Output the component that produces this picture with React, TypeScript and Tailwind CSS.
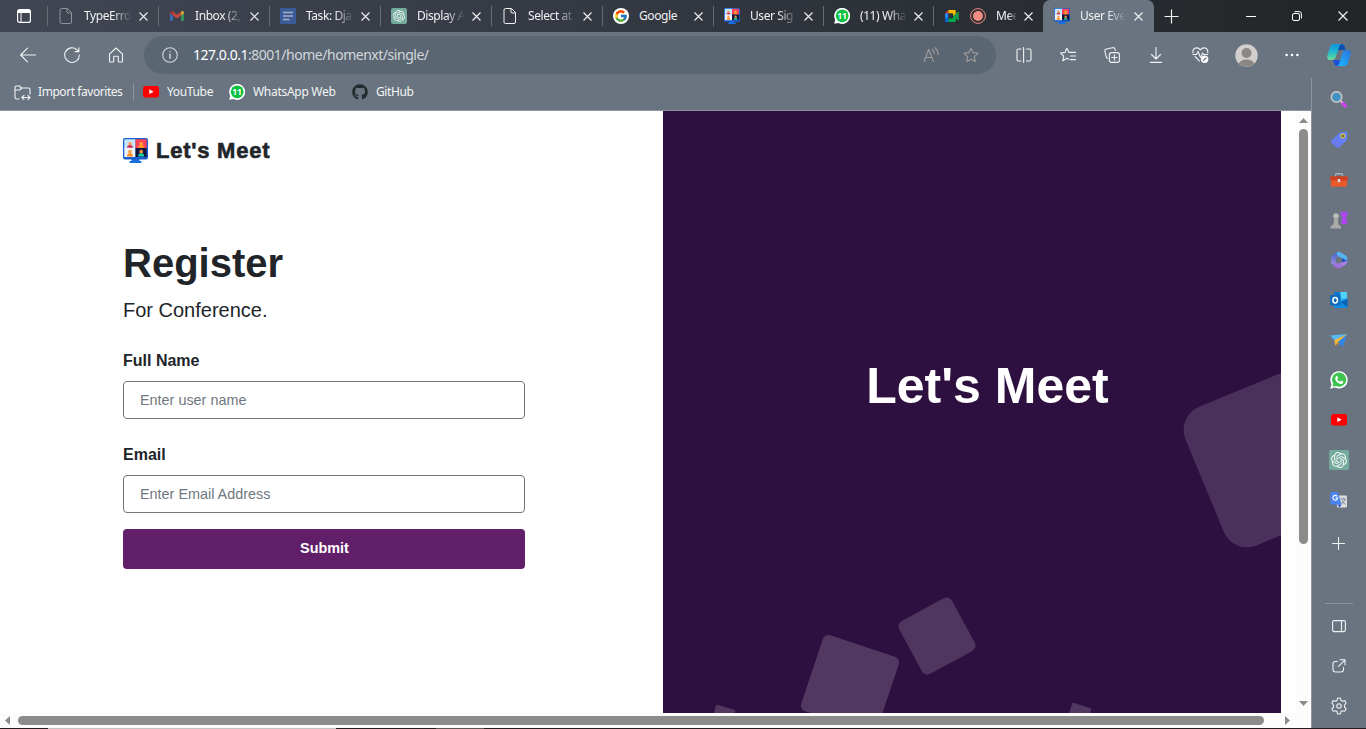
import type { ReactNode } from "react";
import { FaGithub } from "react-icons/fa";
import { FcGoogle } from "react-icons/fc";
import { SiOpenai } from "react-icons/si";

const uiFont = "font-['Noto_Sans','Open_Sans',sans-serif]";
const pageFont = "font-['Liberation_Sans',Arial,sans-serif]";

/* ---------- shared icons ---------- */

function MeetLogo({ size }: { size: number }) {
  return (
    <svg width={size} height={size} viewBox="0 0 25 25">
      <path d="M8.500 20h8v3h1.500q.5 0 .5.500v1.500h-12v-1.500q0-.5.5-.5h1.500z" fill="#1a6fe0" />
      <rect width="25" height="21.500" rx="2" fill="#1a5fd0" />
      <path d="M1.300 9V2.300q0-1 1-1h10.200v9.200H1.300z" fill="#c3e6fb" />
      <path d="M12.500 1.300h10.200q1 0 1 1v8.200H12.500z" fill="#fb4357" />
      <path d="M1.300 10h11.200v9H1.300z" fill="#f1f6fd" />
      <path d="M12.500 10h11.200v9H12.500z" fill="#0d1740" />
      <circle cx="7" cy="5.700" r="1.700" fill="#ff9a56" />
      <path d="M4 9.700q0-2.600 3-2.600t3 2.600z" fill="#d92c55" />
      <circle cx="18.200" cy="5.700" r="1.700" fill="#ffb13b" />
      <path d="M15.200 9.700q0-2.600 3-2.600t3 2.600z" fill="#ff9d18" />
      <circle cx="7" cy="13.700" r="1.900" fill="#ff9d4a" />
      <path d="M4 18.500q0-3.200 3-3.200t3 3.200z" fill="#ff8c1e" />
      <circle cx="18.200" cy="13.700" r="1.900" fill="#ff8a3c" />
      <path d="M15.200 18.500q0-3.200 3-3.200t3 3.200z" fill="#19d0a4" />
    </svg>
  );
}

function PageIcon({ color }: { color: string }) {
  return (
    <svg width="16" height="16" viewBox="0 0 16 16" fill="none" stroke={color}>
      <path d="M3.500.5h6l4 4v9.500q0 1.500-1.500 1.500H3.500Q2 15.500 2 14V2Q2 .5 3.500.5z" />
      <path d="M9 .5v3.500q0 1 1 1h3.500" />
    </svg>
  );
}

function WhatsAppBadge() {
  return (
    <svg width="16" height="16" viewBox="0 0 16 16">
      <path d="M.2 15.800l1-4A8 8 0 1 1 4.500 15z" fill="#fff" />
      <circle cx="8.200" cy="7.800" r="6.400" fill="#0fc143" />
      <text x="8.100" y="11" textAnchor="middle" fontSize="8.500" fontWeight="700" fontFamily="Noto Sans" fill="#fff">11</text>
    </svg>
  );
}

function YouTubeIcon() {
  return (
    <svg width="16" height="12" viewBox="0 0 16 12">
      <rect width="16" height="11.500" rx="2.500" fill="#f00" />
      <path d="M6.300 3.300l4.400 2.400-4.400 2.400z" fill="#fff" />
    </svg>
  );
}

function OpenAiTile({ size }: { size: number }) {
  return (
    <span
      className="flex items-center justify-center rounded-[2px] bg-[#74aa9c] text-white/90"
      style={{ width: size, height: size }}
    >
      <SiOpenai size={size - 4} />
    </span>
  );
}

function Close({ size = 9 }: { size?: number }) {
  return (
    <svg width={size} height={size} viewBox="0 0 9 9" stroke="#f0f1f2" strokeWidth="1.100">
      <path d="M.5.5l8 8M8.500.5l-8 8" />
    </svg>
  );
}

/* ---------- tab strip ---------- */

const docIcon = (
  <svg width="16" height="16" viewBox="0 0 16 16">
    <rect width="16" height="16" rx="1" fill="#3a5b98" />
    <path d="M3 4.500h10M3 8h10M3 11.500h6.500" stroke="#a7b0c0" strokeWidth="1.500" />
  </svg>
);

const gmailIcon = (
  <svg width="16" height="16" viewBox="0 0 16 16">
    <path d="M1 3.500l3 2V13H2q-1 0-1-1z" fill="#3a6cb4" />
    <path d="M15 3.500l-3 2V13h2q1 0 1-1z" fill="#34925a" />
    <path d="M4 3.500l4 3.200 4-3.200v4L8 10.500 4 7.500z" fill="#c2453e" />
    <path d="M1 4.500Q1 2.500 3 3l1 .7v3.800L1 5.500z" fill="#9b3531" />
    <path d="M15 4.500Q15 2.500 13 3l-1 .7v3.800l3-2z" fill="#c9a03a" />
  </svg>
);

const meetIcon = (
  <svg width="16" height="16" viewBox="0 0 16 16">
    <path d="M1 5.500L4.500 2v3.500z" fill="#ea4335" />
    <path d="M4.500 2h6.300q1 0 1 1v3.500L9 8V5.500H4.500z" fill="#ffba00" />
    <path d="M1 5.500h3.500v5H1z" fill="#2684fc" />
    <path d="M1 10.500h3.500V14H2q-1 0-1-1z" fill="#0066da" />
    <path d="M4.500 5.500H9v5H4.500z" fill="#2b3036" />
    <path d="M4.500 10.500H9V8l2.800 1.500V13q0 1-1 1H4.500z" fill="#00ac47" />
    <path d="M9 8l5-4.200q.8-.5.800.4v7.600q0 .9-.8.400z" fill="#1f9a4c" />
  </svg>
);

const recordIcon = (
  <svg width="16" height="16" viewBox="0 0 16 16">
    <circle cx="8" cy="8" r="7.400" fill="none" stroke="#f28b82" />
    <circle cx="8" cy="8" r="5" fill="#f28b82" />
  </svg>
);

type Tab = { icon: ReactNode; extra?: ReactNode; title: string; width: string; fade?: boolean };

const tabs: Tab[] = [
  { icon: <PageIcon color="#8f949c" />, title: "TypeErro", width: "w-[111px]" },
  { icon: gmailIcon, title: "Inbox (2,", width: "w-[111px]" },
  { icon: docIcon, title: "Task: Dja", width: "w-[111px]" },
  { icon: <OpenAiTile size={16} />, title: "Display A", width: "w-[111px]" },
  { icon: <PageIcon color="#f3f3f3" />, title: "Select at", width: "w-[111px]" },
  {
    icon: (
      <span className="flex size-4 items-center justify-center rounded-full bg-white">
        <FcGoogle size={14} />
      </span>
    ),
    title: "Google",
    width: "w-[111px]",
    fade: false,
  },
  { icon: <MeetLogo size={16} />, title: "User Sig", width: "w-[110px]" },
  { icon: <WhatsAppBadge />, title: "(11) Wha", width: "w-[110px]" },
  { icon: meetIcon, extra: recordIcon, title: "Mee", width: "w-[110px]" },
];

function TabTitle({ children, fade = true }: { children: ReactNode; fade?: boolean }) {
  const mask = fade ? "[mask-image:linear-gradient(to_right,#000_60%,transparent_100%)]" : "";
  return (
    <span className={`min-w-0 flex-1 text-[12px] leading-4 tracking-[-0.42px] whitespace-nowrap text-[#f0f1f2] ${mask}`}>
      {children}
    </span>
  );
}

function TabStrip() {
  return (
    <header className="flex h-8 shrink-0 bg-linear-to-r from-[#414653] via-[#323740] to-[#212527]">
      <div className="flex w-[47px] items-center justify-center pl-px">
        <svg width="14" height="14" viewBox="0 0 14 14" fill="none" stroke="#fff">
          <rect x=".6" y=".6" width="12.800" height="12.800" rx="2" strokeWidth="1.200" />
          <path d="M1 2.500h12" strokeWidth="3" />
          <path d="M4 3v10" />
        </svg>
      </div>
      {tabs.map((t) => (
        <div key={t.title} className={`flex shrink-0 items-center ${t.width}`}>
          <span className="h-5 w-px bg-[#686b6f]" />
          <span className="ml-2.5 flex w-4 shrink-0 justify-center">{t.icon}</span>
          {t.extra && <span className="ml-2.5 w-4 shrink-0">{t.extra}</span>}
          <span className="ml-[10px] flex min-w-0 flex-1">
            <TabTitle fade={t.fade}>{t.title}</TabTitle>
          </span>
          <span className="mr-[10px] ml-[7px]">
            <Close />
          </span>
        </div>
      ))}
      <div className="flex w-[111px] shrink-0 items-center rounded-t-[7px] bg-[#6a7481]">
        <span className="ml-[11px] w-4 shrink-0">
          <MeetLogo size={16} />
        </span>
        <span className="ml-[10px] flex min-w-0 flex-1">
          <TabTitle>User Eve</TabTitle>
        </span>
        <span className="mr-[11px] ml-[8px]">
          <Close />
        </span>
      </div>
      <div className="flex w-[35px] items-center justify-center">
        <svg width="15" height="15" viewBox="0 0 15 15" stroke="#f3f3f3" strokeWidth="1.200">
          <path d="M7.500.5v14M.5 7.500h14" />
        </svg>
      </div>
      <div className="ml-auto flex w-[139px]">
        <span className="flex w-[47px] items-center justify-center">
          <span className="mt-px h-px w-2.5 bg-white" />
        </span>
        <span className="flex w-[45px] items-center justify-center">
          <svg width="10" height="10" viewBox="0 0 10 10" fill="none" stroke="#fff">
            <rect x=".5" y="2.500" width="7" height="7" rx="1.500" />
            <path d="M2.500.6H7Q9.400.6 9.400 3v4.500" />
          </svg>
        </span>
        <span className="flex w-[47px] items-center justify-center">
          <Close size={10} />
        </span>
      </div>
    </header>
  );
}

/* ---------- toolbar ---------- */

function ToolButton({ children, width = "w-11" }: { children: ReactNode; width?: string }) {
  return <span className={`flex shrink-0 items-center justify-center ${width}`}>{children}</span>;
}

function Line({ children, color = "#f0f1f2", w = 16, h = 16 }: { children: ReactNode; color?: string; w?: number; h?: number }) {
  return (
    <svg
      width={w}
      height={h}
      viewBox={`0 0 ${w} ${h}`}
      fill="none"
      stroke={color}
      strokeWidth="1.100"
      strokeLinecap="round"
      strokeLinejoin="round"
    >
      {children}
    </svg>
  );
}

function Copilot() {
  return (
    <svg width="24" height="24" viewBox="0 0 24 24">
      <defs>
        <linearGradient id="cpA" x1="0" y1="0" x2="0" y2="1">
          <stop offset="0" stopColor="#1193dc" />
          <stop offset=".5" stopColor="#20b9d1" />
          <stop offset="1" stopColor="#6fdc92" />
        </linearGradient>
        <linearGradient id="cpB" x1="1" y1="0" x2="0" y2="1">
          <stop offset="0" stopColor="#2d6fdc" />
          <stop offset=".6" stopColor="#1f9ff2" />
          <stop offset="1" stopColor="#15b9ff" />
        </linearGradient>
      </defs>
      <path d="M13 1h2.500q1.800.5 2.300 3l.9 3H14l-4 .5z" fill="#0c4fae" />
      <path d="M6 17h5l3 .5L12.500 23H10q-2.200 0-2.700-2z" fill="#1b50d8" />
      <path d="M7 1h8q-2 0-2.800 2.500L8.800 14q-.9 3-3.800 3H3q-3.500 0-2.700-4L3 4q1-3 4-3z" fill="url(#cpA)" />
      <path d="M17 23H9.500q2 0 2.800-2.500l3.100-10.500q.9-3 3.800-3H21q3.500 0 2.700 4L21 20q-1 3-4 3z" fill="url(#cpB)" />
    </svg>
  );
}

const starPath = "M8 1.200l2.100 4.400 4.800.7-3.500 3.400.8 4.800L8 12.200l-4.200 2.300.8-4.800L1.100 6.300l4.800-.7z";

function Toolbar() {
  return (
    <div className="flex h-[46px] shrink-0 items-center bg-[#6a7481] pl-1.5">
      <ToolButton>
        <Line>
          <path d="M15.500 8H.8M7.500 1.200L.7 8l6.800 6.800" />
        </Line>
      </ToolButton>
      <ToolButton>
        <Line>
          <path d="M15.300 8A7.300 7.300 0 1 1 13 2.800l1.800 1.700M14.900.8v3.800h-3.800" />
        </Line>
      </ToolButton>
      <ToolButton>
        <Line>
          <path d="M1.500 7.200L8 1l6.500 6.200V14q0 1-1 1H11q-.7 0-.7-.7V10q0-.8-.8-.8h-3q-.8 0-.8.8v4.300q0 .7-.7.700H2.500q-1 0-1-1z" />
        </Line>
      </ToolButton>
      <div className="ml-1.5 flex h-[38px] w-[852px] items-center rounded-full bg-[#5b6673] pr-4 pl-[18px]">
        <Line color="#d5d8dc">
          <circle cx="8" cy="8" r="7.300" />
          <path d="M8 7.300v4M8 4.600v.2" strokeWidth="1.400" />
        </Line>
        <span className="ml-[15px] flex-1 pb-px text-[14px] tracking-[-0.48px] text-[#d3d7dc]">
          <span className="text-white">127.0.0.1</span>:8001/home/homenxt/single/
        </span>
        <span className="mr-6">
          <Line color="#a09d9b">
            <path d="M1 14.500L5.700 2.500l4.700 12M2.700 10.500h6M9.500 2.500q1.800 1.600 1.500 4M11.800.8q3.500 2.500 3.200 6.700" />
          </Line>
        </span>
        <Line color="#a09d9b">
          <path d={starPath} />
        </Line>
        <span className="w-px" />
      </div>
      <span className="w-1.5" />
      <ToolButton>
        <Line>
          <path d="M5 2H2.500Q1 2 1 3.500v9Q1 14 2.500 14H5M10.500 2h3Q15 2 15 3.500v9q0 1.500-1.500 1.500h-3M7.600.5v15" />
        </Line>
      </ToolButton>
      <ToolButton>
        <Line>
          <path d="M8.800 12.200L7 11.300l-4.200 2.500.9-4.700L.6 6l4.300-.6L6.900 1.300l2 4.100H15.500M10.500 9h5M10.500 12.600h5" />
        </Line>
      </ToolButton>
      <ToolButton>
        <Line>
          <rect x="5.400" y="5.600" width="10" height="9.800" rx="2.200" />
          <path d="M10.400 7.800v5.400M7.700 10.500h5.400M3.700 11.500q-1.200-.4-1.500-1.800L.9 4.300Q.6 2.500 2.300 2L8.500.7q2-.4 2.500 1.500l.3 1.200" />
        </Line>
      </ToolButton>
      <ToolButton>
        <Line>
          <path d="M8 .5v11.200M3.500 7.500L8 12l4.500-4.500M2.500 15.400h11" />
        </Line>
      </ToolButton>
      <ToolButton>
        <Line w={17}>
          <path d="M1 6Q.3 1.200 4.500.9 7 .8 8.300 3 9.600.8 12.100.9 16.300 1.200 15.800 6M3 9.500l4.500 4.700M1 7.500h3.500L6 4.500l2.500 6L10.700 6l1 1.500h3.800" />
          <circle cx="12.600" cy="12.300" r="3.700" fill="#fff" stroke="none" />
          <path d="M11.300 13.600l2.600-2.600" stroke="#6a7481" />
        </Line>
      </ToolButton>
      <ToolButton width="w-12">
        <svg width="23" height="23" viewBox="0 0 23 23">
          <clipPath id="avatar">
            <circle cx="11.500" cy="11.500" r="11" />
          </clipPath>
          <circle cx="11.500" cy="11.500" r="11.200" fill="#d2d0ce" />
          <g fill="#8a8784" clipPath="url(#avatar)">
            <circle cx="11.500" cy="9" r="5" />
            <ellipse cx="11.500" cy="20.500" rx="7.800" ry="5" />
          </g>
        </svg>
      </ToolButton>
      <ToolButton>
        <svg width="14" height="4" viewBox="0 0 14 4" fill="#fff">
          <circle cx="1.600" cy="2" r="1.300" />
          <circle cx="7" cy="2" r="1.300" />
          <circle cx="12.400" cy="2" r="1.300" />
        </svg>
      </ToolButton>
      <ToolButton width="w-[49px]">
        <Copilot />
      </ToolButton>
    </div>
  );
}

function FavoritesBar() {
  return (
    <nav className="flex h-[33px] shrink-0 items-center border-b border-[#8e959e] bg-[#6a7481] pb-1 pl-3.5 text-[12px] text-[#f3f4f5]">
      <Line w={17} h={15}>
        <path d="M5 14H2.500Q1 14 1 12.500V2.500Q1 1 2.500 1h3l2 2h7Q16 3 16 4.500V9M1 5h4.500L8 3M8 12.500h8M10 10.300l-2.200 2.200 2.200 2.200M13.800 10.300l2.200 2.200-2.200 2.200" />
      </Line>
      <span className="ml-[7px] w-[86px] tracking-[-0.44px] whitespace-nowrap">Import favorites</span>
      <span className="ml-[9px] h-4 w-px bg-[#8f969e]" />
      <span className="ml-[9px]">
        <YouTubeIcon />
      </span>
      <span className="ml-2 w-[46px] tracking-[-0.35px] whitespace-nowrap">YouTube</span>
      <span className="ml-4">
        <WhatsAppBadge />
      </span>
      <span className="ml-2 w-[84px] tracking-[-0.29px] whitespace-nowrap">WhatsApp Web</span>
      <FaGithub size={16} className="ml-[15px] text-[#24292f]" />
      <span className="ml-2 tracking-[-0.38px] whitespace-nowrap">GitHub</span>
    </nav>
  );
}

/* ---------- web page ---------- */

function Field({ label, placeholder }: { label: string; placeholder: string }) {
  return (
    <label className="block">
      <span className="block text-[16px] leading-6 font-bold">{label}</span>
      <input
        className="mt-2 block h-[38px] w-full rounded-[4px] border border-[#767676] bg-white px-4 text-[14.4px] placeholder:text-[#6f7880]"
        placeholder={placeholder}
      />
    </label>
  );
}

function RegisterPane() {
  return (
    <section className="w-[663px] shrink-0 pt-[27px] pl-[123px] text-[#212529]">
      <div className="flex h-[25px] items-center gap-2">
        <MeetLogo size={25} />
        <span className="text-[22px] leading-[25px] font-bold tracking-[0.75px] [-webkit-text-stroke:0.6px_#212529]">
          Let's Meet
        </span>
      </div>
      <div className="mt-[76px] w-[402px]">
        <h1 className="text-[40px] leading-[48px] font-bold">Register</h1>
        <p className="mt-2 text-[20px] leading-[30px]">For Conference.</p>
        <form className="mt-6">
          <Field label="Full Name" placeholder="Enter user name" />
          <div className="mt-6">
            <Field label="Email" placeholder="Enter Email Address" />
          </div>
          <button
            type="button"
            className="mt-4 block h-10 w-full rounded-[4px] bg-[#611f69] pb-px pl-px text-[14.4px] font-bold text-white"
          >
            Submit
          </button>
        </form>
      </div>
    </section>
  );
}

function HeroPane() {
  return (
    <section className="relative w-[618px] shrink-0 overflow-hidden bg-[#2e1040] pt-[245px] pl-[31px] text-center">
      <span className="absolute top-[271px] left-[536px] size-[150px] -rotate-[22.5deg] rounded-[25px] bg-[#4a305b]" />
      <span className="absolute top-[495px] left-[244px] size-[60px] -rotate-[28.5deg] rounded-[6px] bg-[#50365f]" />
      <span className="absolute top-[533px] left-[147px] size-[80px] rotate-[18.5deg] rounded-[6px] bg-[#523861]" />
      <span className="absolute top-[596px] left-[50px] size-5 rotate-[16.500deg] rounded-[1px] bg-[#523861]" />
      <span className="absolute top-[594px] left-[406px] size-5 rotate-[18deg] rounded-[1px] bg-[#523861]" />
      <h2 className="relative text-[50px] leading-[60px] font-bold text-white">Let's Meet</h2>
    </section>
  );
}

function VerticalScrollbar() {
  return (
    <div className="flex w-[15px] flex-col items-center bg-[#fcfcfc] pt-[7px]">
      <svg width="9" height="5" viewBox="0 0 9 5" fill="#8b8b8b">
        <path d="M0 5L4.500 0 9 5z" />
      </svg>
      <span className="mt-1.5 h-[415px] w-[9px] rounded-full bg-[#8b8b8b]" />
      <svg className="mt-auto mb-[7px]" width="9" height="5" viewBox="0 0 9 5" fill="#8b8b8b">
        <path d="M0 0l4.500 5L9 0z" />
      </svg>
    </div>
  );
}

function HorizontalScrollbar() {
  return (
    <div className="flex h-[15px] shrink-0 items-center bg-[#fcfcfc] pl-[5px]">
      <svg width="5" height="9" viewBox="0 0 5 9" fill="#8b8b8b">
        <path d="M5 0L0 4.500 5 9z" />
      </svg>
      <span className="ml-2 h-[9px] w-[1246px] rounded-full bg-[#8b8b8b]" />
      <svg className="ml-[21px]" width="5" height="9" viewBox="0 0 5 9" fill="#8b8b8b">
        <path d="M0 0l5 4.500L0 9z" />
      </svg>
    </div>
  );
}

/* ---------- sidebar ---------- */

const searchIcon = (
  <svg width="18" height="18" viewBox="0 0 18 18">
    <path d="M12 11.500l3.500 3.500" stroke="#cf45f5" strokeWidth="3.200" strokeLinecap="round" />
    <path d="M10.500 9.800l1.800 1.800" stroke="#c4c4c4" strokeWidth="2" />
    <circle cx="6.500" cy="6" r="5.200" fill="#3f93c4" stroke="#c3c3c1" strokeWidth="1.700" />
  </svg>
);

const tagIcon = (
  <svg width="18" height="18" viewBox="0 0 18 18">
    <defs>
      <linearGradient id="tag" x1="1" y1="0" x2="0" y2="1">
        <stop offset="0" stopColor="#5f8bff" />
        <stop offset="1" stopColor="#6c74e8" />
      </linearGradient>
    </defs>
    <path d="M10 1.500L15.800.8q1.500 0 1.500 1.500L17 8.800 9.300 16.500q-1.300 1.200-2.600 0L1.300 11.800q-.9-1.300 0-2.600z" fill="url(#tag)" />
    <circle cx="12.800" cy="5" r="1.800" fill="#55565a" stroke="#e8c32a" strokeWidth="1.200" />
  </svg>
);

const toolboxIcon = (
  <svg width="18" height="18" viewBox="0 0 18 18">
    <path d="M5.500 5.500V4q0-1.300 1.300-1.300h4.400Q12.500 2.700 12.500 4v1.500" fill="none" stroke="#a9afb4" strokeWidth="1.400" />
    <rect x="1" y="9" width="16" height="6.800" rx="1" fill="#e8592b" />
    <rect y="5.300" width="18" height="4.200" rx="1" fill="#cc4121" />
    <rect x="7.700" y="8" width="2.600" height="3.200" rx=".6" fill="#d7dadc" />
  </svg>
);

const chessIcon = (
  <svg width="18" height="18" viewBox="0 0 18 18">
    <path d="M10.300.5h1.700v1.700h1.200V.2h1.900v2h1.200V.5H18l-.5 3.800-1.400 1 .5 5.500 1.100 2.200h-7l1.100-2.200.3-5.500-1.300-1z" fill="#b045f2" />
    <circle cx="6" cy="5" r="2.800" fill="#bcbcba" />
    <path d="M3.200 7.800h5.600L7.700 9.500l.8 4 2.500 1.800v2.200H.5v-2.200L3.300 13.500l.9-4z" fill="#aaaaa8" />
  </svg>
);

const m365Icon = (
  <svg width="18" height="18" viewBox="0 0 18 18">
    <defs>
      <linearGradient id="mA" x1="0" y1="0" x2="0" y2="1">
        <stop offset="0" stopColor="#3a6bc6" />
        <stop offset="1" stopColor="#a98ae4" />
      </linearGradient>
      <linearGradient id="mB" x1="0" y1="1" x2="1" y2="0">
        <stop offset="0" stopColor="#8d63cc" />
        <stop offset="1" stopColor="#b98aea" />
      </linearGradient>
    </defs>
    <path d="M7.500 1L2.300 4.200Q1 5 1 6.800V13l4.800 1.500V7.500L10 4.500z" fill="url(#mA)" />
    <path d="M7 1.200q1.500-.9 3 0l5.700 3.200Q17.200 5.400 17.200 7v4.500L12 7.500 7 4z" fill="#55b4f2" />
    <path d="M12 7l5.200 3v2.500q0 .8-.7 1.200L12 10.500z" fill="#1f4fb4" />
    <path d="M5.500 11.500l2 1 9.500-2.500v1.500q0 1.500-1.300 2.300L9.500 17.200q-1.500.8-3 0L3 15z" fill="url(#mB)" />
  </svg>
);

const outlookIcon = (
  <svg width="18" height="18" viewBox="0 0 18 18">
    <rect x="4" y="1" width="13" height="13" rx="1" fill="#28a8ea" />
    <path d="M4 1h6.500v6.500H4z" fill="#0f78d4" />
    <path d="M10.500 1H17v6.500h-6.500z" fill="#50d3fb" />
    <path d="M4 17V10.500h6l7.500-3V16q0 1-1 1z" fill="#148be0" />
    <path d="M17.500 8v8.500L11 11z" fill="#0b63b4" />
    <rect x="0" y="4" width="10.500" height="10.500" rx="1" fill="#0f6cbd" />
    <ellipse cx="5.200" cy="9.200" rx="2.300" ry="2.700" fill="none" stroke="#fff" strokeWidth="1.500" />
  </svg>
);

const dropIcon = (
  <svg width="18" height="18" viewBox="0 0 18 18">
    <path d="M.3 4.500L17.500 3 4.500 9.300z" fill="#55bdf5" />
    <path d="M17.500 3L12.500 16 7 11z" fill="#2f86e6" />
    <path d="M17.500 3L4.500 9l.8 5.800L8 11z" fill="#f4b93a" />
    <path d="M5.300 14.800L8 11l1.500 1.300z" fill="#c9861b" />
  </svg>
);

const whatsAppIcon = (
  <svg width="18" height="18" viewBox="0 0 18 18">
    <path d="M.3 17.800l1.200-4.500A8.700 8.700 0 1 1 5 16.600z" fill="#fff" />
    <path d="M2.500 15.700l.8-3A7.100 7.100 0 1 1 6 15z" fill="#3fc351" />
    <path
      d="M6.400 4.900q.6-.3.900.2l.7 1.600q.1.400-.2.700l-.6.800q.9 1.700 2.800 2.500l.8-.9q.3-.3.600-.1l1.700.8q.3.200.2.600-.2 1.500-1.600 1.800-1.500.3-3.800-1.200-2-1.500-2.600-3.300-.5-2.200 1.100-3.500z"
      fill="#fff"
    />
  </svg>
);

const translateIcon = (
  <svg width="18" height="18" viewBox="0 0 18 18">
    <rect x="7" y="4.500" width="10" height="12" rx="1" fill="#dcdcdc" />
    <path d="M10.500 8h5.500M13.200 6.800V8M15 8q-.8 3-3.500 5M12 9.500q1 2.500 3.300 3.800" fill="none" stroke="#74808c" strokeWidth=".9" />
    <path d="M1.500 1H8l3.500 12.500h-10q-1 0-1-1V2q0-1 1-1z" fill="#4a84f0" />
    <path d="M7.500 13.500h4L9.500 16.500z" fill="#2b4fd0" />
    <path d="M7.200 5.300A2.400 2.400 0 1 0 7.700 7H5.500" fill="none" stroke="#fff" strokeWidth="1.100" />
  </svg>
);

const sidebarApps: { name: string; icon: ReactNode }[] = [
  { name: "search", icon: searchIcon },
  { name: "shopping", icon: tagIcon },
  { name: "tools", icon: toolboxIcon },
  { name: "games", icon: chessIcon },
  { name: "m365", icon: m365Icon },
  { name: "outlook", icon: outlookIcon },
  { name: "drop", icon: dropIcon },
  { name: "whatsapp", icon: whatsAppIcon },
  { name: "youtube", icon: <YouTubeIcon /> },
  { name: "chatgpt", icon: <OpenAiTile size={20} /> },
  { name: "translate", icon: translateIcon },
];

function Sidebar() {
  return (
    <aside className="flex w-[55px] flex-col items-center border-l border-[#8e959e] bg-[#6a7481] pt-0.5">
      {sidebarApps.map((a) => (
        <span key={a.name} className="flex h-10 w-full shrink-0 items-center justify-center">
          {a.icon}
        </span>
      ))}
      <span className="mt-[17px] mr-px">
        <Line w={13} h={13}>
          <path d="M6.500.5v12M.5 6.500h12" />
        </Line>
      </span>
      <span className="mt-auto h-px w-7 bg-[#8b929b]" />
      <span className="mt-0.5 flex h-10 items-center">
        <Line w={14} h={14}>
          <rect x=".6" y="1.600" width="12.800" height="11" rx="1.500" />
          <path d="M9.500 2v10.500" />
        </Line>
      </span>
      <span className="flex h-10 items-center">
        <Line w={14} h={14}>
          <path d="M5.500 2.500h-2Q1 2.500 1 5v5.500Q1 13 3.500 13H9q2.500 0 2.500-2.500v-2M8 .8h5v5M13 .8L6.500 7.300" />
        </Line>
      </span>
      <span className="mb-0.5 flex h-10 items-center">
        <Line w={18} h={18}>
          <circle cx="9" cy="9" r="2.200" />
          <path d="M7.500 1.300Q9 .8 10.500 1.300L11 3.500l1.300.8 2.300-.7q1.100 1.100 1.500 2.600L14.500 8v2l1.600 1.700q-.4 1.500-1.500 2.600l-2.300-.6-1.300.8-.5 2.200q-1.500.5-3 0L7 14.500l-1.300-.8-2.300.6q-1.100-1.100-1.500-2.600L3.500 10V8L1.900 6.200q.4-1.500 1.500-2.600l2.300.7L7 3.500z" />
        </Line>
      </span>
    </aside>
  );
}

export default function App() {
  return (
    <div className={`flex h-[729px] w-[1366px] flex-col overflow-hidden bg-white ${uiFont}`}>
      <TabStrip />
      <Toolbar />
      <div className="flex h-[650px] shrink-0">
        <div className="flex w-[1311px] flex-col">
          <FavoritesBar />
          <main className={`flex h-[602px] shrink-0 ${pageFont}`}>
            <RegisterPane />
            <HeroPane />
            <span className="w-[15px]" />
            <VerticalScrollbar />
          </main>
          <HorizontalScrollbar />
        </div>
        <Sidebar />
      </div>
      <div className="flex h-px shrink-0 bg-[#231c1e]">
        <span className="ml-12 w-72 bg-[#c2c2c2]" />
        <span className="ml-[100px] w-12 bg-[#5a5552]" />
      </div>
    </div>
  );
}
